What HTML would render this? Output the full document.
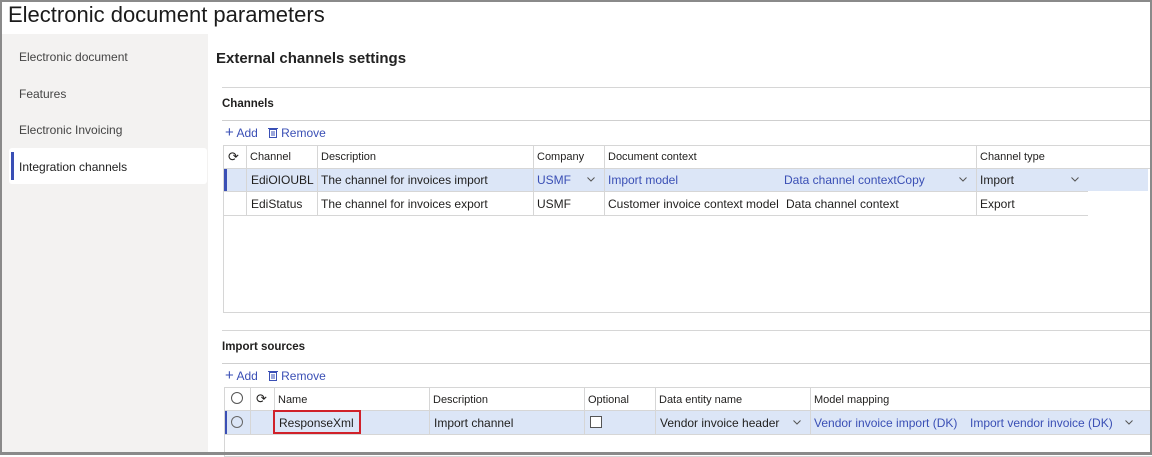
<!DOCTYPE html>
<html><head><meta charset="utf-8"><style>
*{box-sizing:border-box;margin:0;padding:0}
body{width:1152px;height:455px;overflow:hidden;background:#fff;font-family:"Liberation Sans",sans-serif;font-size:12px;color:#201f1e;position:relative}
.a{position:absolute}
.frame{left:0;top:0;width:1152px;height:455px;border:2px solid #8a8a8a;border-bottom-width:3px}
.t{white-space:nowrap}
.hl{background:#dce6f7}
.lnk{color:#3a4fb5}
.line{background:#d6d6d6;height:1px}
.vl{background:#d6d6d6;width:1px}
.chev{width:8px;height:5px}
</style></head><body>
<div class="a t" style="left:8px;top:2px;font-size:22px;color:#1b1b1b">Electronic document parameters</div>
<div class="a" style="left:2px;top:34px;width:206px;height:420px;background:#f3f2f1"></div>
<div class="a t" style="left:19px;top:50px;color:#444">Electronic document</div>
<div class="a t" style="left:19px;top:87px;color:#444">Features</div>
<div class="a t" style="left:19px;top:123px;color:#444">Electronic Invoicing</div>
<div class="a" style="left:9px;top:148px;width:198px;height:36px;background:#fff;border-radius:3px"></div>
<div class="a" style="left:11px;top:152px;width:3px;height:28px;background:#3a4fb5"></div>
<div class="a t" style="left:19px;top:160px;color:#222">Integration channels</div>

<div class="a t" style="left:216px;top:50px;font-size:15px;color:#222;font-weight:bold">External channels settings</div>
<div class="a line" style="left:222px;top:87px;width:930px"></div>
<div class="a t" style="left:222px;top:98px;font-weight:bold;font-size:11.5px">Channels</div>
<div class="a line" style="left:222px;top:120px;width:930px;background:#cfcfcf"></div>
<div class="a t lnk" style="left:225px;top:124px"><span style="font-size:15px">+</span> Add &nbsp; <svg width="10" height="11" viewBox="0 0 10 11" style="vertical-align:-1px"><rect x="1.5" y="2.5" width="7" height="8" fill="none" stroke="#3a4fb5"/><line x1="0" y1="1.5" x2="10" y2="1.5" stroke="#3a4fb5"/><line x1="4" y1="4" x2="4" y2="9" stroke="#3a4fb5"/><line x1="6" y1="4" x2="6" y2="9" stroke="#3a4fb5"/></svg> Remove</div>

<div class="a" style="left:223px;top:145px;width:930px;height:168px;border:1px solid #d6d6d6;border-right:none"></div>
<div class="a hl" style="left:224px;top:168px;width:924px;height:23px"></div>
<div class="a" style="left:224px;top:168px;width:3px;height:23px;background:#3a4fb5"></div>
<div class="a line" style="left:223px;top:168px;width:929px"></div>
<div class="a line" style="left:223px;top:191px;width:865px"></div>
<div class="a line" style="left:223px;top:215px;width:865px"></div>
<div class="a vl" style="left:246px;top:145px;height:70px"></div>
<div class="a vl" style="left:317px;top:145px;height:70px"></div>
<div class="a vl" style="left:533px;top:145px;height:70px"></div>
<div class="a vl" style="left:604px;top:145px;height:70px"></div>
<div class="a vl" style="left:976px;top:145px;height:70px"></div>
<div class="a t" style="left:228px;top:149px;font-size:13px">⟳</div>
<div class="a t" style="left:250px;top:151px;font-size:11px">Channel</div>
<div class="a t" style="left:321px;top:151px;font-size:11px">Description</div>
<div class="a t" style="left:537px;top:151px;font-size:11px">Company</div>
<div class="a t" style="left:608px;top:151px;font-size:11px">Document context</div>
<div class="a t" style="left:980px;top:151px;font-size:11px">Channel type</div>
<div class="a t" style="left:251px;top:173px">EdiOIOUBL</div>
<div class="a t" style="left:321px;top:173px">The channel for invoices import</div>
<div class="a t lnk" style="left:537px;top:173px">USMF</div>
<svg class="a chev" style="left:587px;top:177px" viewBox="0 0 8 5"><path d="M0.5 0.5L4 4L7.5 0.5" fill="none" stroke="#555"/></svg>
<div class="a t lnk" style="left:608px;top:173px">Import model</div>
<div class="a t lnk" style="left:784px;top:173px">Data channel contextCopy</div>
<svg class="a chev" style="left:959px;top:177px" viewBox="0 0 8 5"><path d="M0.5 0.5L4 4L7.5 0.5" fill="none" stroke="#555"/></svg>
<div class="a t" style="left:980px;top:173px">Import</div>
<svg class="a chev" style="left:1071px;top:177px" viewBox="0 0 8 5"><path d="M0.5 0.5L4 4L7.5 0.5" fill="none" stroke="#555"/></svg>
<div class="a t" style="left:251px;top:197px">EdiStatus</div>
<div class="a t" style="left:321px;top:197px">The channel for invoices export</div>
<div class="a t" style="left:537px;top:197px">USMF</div>
<div class="a t" style="left:608px;top:197px">Customer invoice context model</div>
<div class="a t" style="left:784px;top:197px;background:#fff;padding-left:2px">Data channel context</div>
<div class="a t" style="left:980px;top:197px">Export</div>

<div class="a line" style="left:222px;top:330px;width:930px"></div>
<div class="a t" style="left:222px;top:341px;font-weight:bold;font-size:11.5px">Import sources</div>
<div class="a line" style="left:222px;top:363px;width:930px;background:#cfcfcf"></div>
<div class="a t lnk" style="left:225px;top:367px"><span style="font-size:15px">+</span> Add &nbsp; <svg width="10" height="11" viewBox="0 0 10 11" style="vertical-align:-1px"><rect x="1.5" y="2.5" width="7" height="8" fill="none" stroke="#3a4fb5"/><line x1="0" y1="1.5" x2="10" y2="1.5" stroke="#3a4fb5"/><line x1="4" y1="4" x2="4" y2="9" stroke="#3a4fb5"/><line x1="6" y1="4" x2="6" y2="9" stroke="#3a4fb5"/></svg> Remove</div>

<div class="a" style="left:224px;top:387px;width:930px;height:70px;border:1px solid #d6d6d6;border-right:none"></div>
<div class="a hl" style="left:225px;top:410px;width:925px;height:24px"></div>
<div class="a" style="left:225px;top:410px;width:2px;height:24px;background:#3a4fb5"></div>
<div class="a line" style="left:224px;top:410px;width:928px"></div>
<div class="a line" style="left:224px;top:434px;width:928px"></div>
<div class="a vl" style="left:250px;top:387px;height:47px"></div>
<div class="a vl" style="left:274px;top:387px;height:47px"></div>
<div class="a vl" style="left:429px;top:387px;height:47px"></div>
<div class="a vl" style="left:584px;top:387px;height:47px"></div>
<div class="a vl" style="left:655px;top:387px;height:47px"></div>
<div class="a vl" style="left:810px;top:387px;height:47px"></div>
<div class="a" style="left:231px;top:392px;width:12px;height:12px;border:1px solid #555;border-radius:50%"></div>
<div class="a" style="left:231px;top:416px;width:12px;height:12px;border:1px solid #666;border-radius:50%"></div>
<div class="a t" style="left:256px;top:391px;font-size:13px">⟳</div>
<div class="a t" style="left:278px;top:394px;font-size:11px">Name</div>
<div class="a t" style="left:433px;top:394px;font-size:11px">Description</div>
<div class="a t" style="left:588px;top:394px;font-size:11px">Optional</div>
<div class="a t" style="left:659px;top:394px;font-size:11px">Data entity name</div>
<div class="a t" style="left:814px;top:394px;font-size:11px">Model mapping</div>
<div class="a" style="left:273px;top:410px;width:88px;height:24px;border:2px solid #d0212a"></div>
<div class="a t" style="left:279px;top:416px">ResponseXml</div>
<div class="a t" style="left:434px;top:416px">Import channel</div>
<div class="a" style="left:590px;top:416px;width:12px;height:12px;border:1px solid #555;background:#fff"></div>
<div class="a t" style="left:660px;top:416px">Vendor invoice header</div>
<svg class="a chev" style="left:793px;top:420px" viewBox="0 0 8 5"><path d="M0.5 0.5L4 4L7.5 0.5" fill="none" stroke="#555"/></svg>
<div class="a t lnk" style="left:814px;top:416px">Vendor invoice import (DK)</div>
<div class="a t lnk" style="left:970px;top:416px">Import vendor invoice (DK)</div>
<svg class="a chev" style="left:1125px;top:420px" viewBox="0 0 8 5"><path d="M0.5 0.5L4 4L7.5 0.5" fill="none" stroke="#555"/></svg>

<div class="a frame"></div>
</body></html>
